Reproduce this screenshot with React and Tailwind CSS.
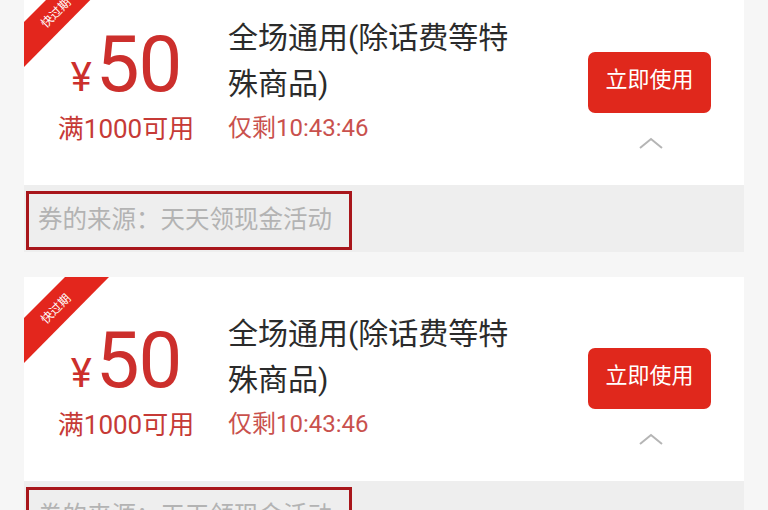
import React from "react";

const coupons = [
  { id: 1, amount: 50, limit: "满1000可用", title: "全场通用(除话费等特殊商品)", left: "仅剩10:43:46", source: "券的来源：天天领现金活动" },
  { id: 2, amount: 50, limit: "满1000可用", title: "全场通用(除话费等特殊商品)", left: "仅剩10:43:46", source: "券的来源：天天领现金活动" },
];

const Ribbon = () => (
  <svg width={90} height={90} viewBox="0 0 90 90" className="absolute left-0 top-0">
    <polygon points="0,41 41,0 85,0 0,86" fill="#e3261d" />
    <text
      x={32}
      y={36}
      fill="#fff"
      fontSize={12}
      textAnchor="middle"
      transform="rotate(-45 32 32)"
      style={{ fontFamily: '"Noto Sans CJK SC", sans-serif' }}
    >
      快过期
    </text>
  </svg>
);

const CouponCard = ({ coupon }) => {
  return (
    <div className="mx-[24px] bg-[#eeeeee]">
      <div className="relative h-[204px] bg-white flex">
        <Ribbon />
        <div className="w-[204px] flex flex-col items-center pt-[45px]">
          <div className="flex items-end text-[#cc2f2c] leading-none">
            <span className="text-[40px] mb-[6px] mr-[4px]">¥</span>
            <span className="text-[78px] tracking-[-1px]">{coupon.amount}</span>
          </div>
          <div className="mt-[12px] text-[26px] leading-none text-[#c63a36]">{coupon.limit}</div>
        </div>
        <div className="flex-1 pt-[34px]">
          <div className="w-[292px] text-[30px] leading-[46px] text-[#2b2b2b]">{coupon.title}</div>
          <div className="mt-[9px] text-[24px] leading-none text-[#c9514d]">{coupon.left}</div>
        </div>
        <div className="w-[156px] flex flex-col items-start pt-[71px]">
          <button className="w-[123px] h-[61px] rounded-[7px] bg-[#e0281c] text-white text-[22px] leading-none pb-[6px]">
            立即使用
          </button>
          <svg width={26} height={14} viewBox="0 0 26 14" className="ml-[50px] mt-[23px]">
            <path d="M2 12 L13 3 L24 12" fill="none" stroke="#b5b5b5" strokeWidth={2} />
          </svg>
        </div>
      </div>
      <div className="h-[67px] pt-[6px] pl-[2px]">
        <div className="w-[326px] h-[59px] border-[3px] border-[#a8161b] flex items-center pl-[9px] text-[24.5px] text-[#b3b3b3]">
          {coupon.source}
        </div>
      </div>
    </div>
  );
};

export default function App() {
  return (
    <div
      className="w-[768px] h-[510px] overflow-hidden bg-[#f6f6f6]"
      style={{ fontFamily: 'Roboto, "Noto Sans CJK SC", sans-serif' }}
    >
      <div className="mt-[-19px] flex flex-col gap-[25px]">
        {coupons.map((c) => (
          <CouponCard key={c.id} coupon={c} />
        ))}
      </div>
    </div>
  );
}
